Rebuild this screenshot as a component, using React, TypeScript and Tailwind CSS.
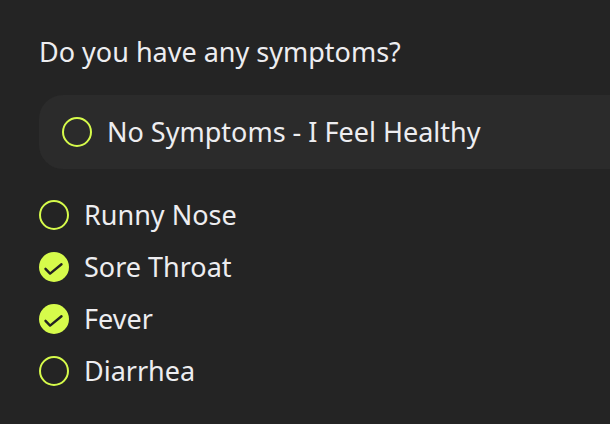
const options = [
  { label: 'Runny Nose', checked: false },
  { label: 'Sore Throat', checked: true },
  { label: 'Fever', checked: true },
  { label: 'Diarrhea', checked: false },
];

function Check({ checked }: { checked: boolean }) {
  if (!checked) {
    return <span className="w-[30px] h-[30px] shrink-0 rounded-full border-2 border-[#d6fb4b]" />;
  }
  return (
    <span className="w-[30px] h-[30px] shrink-0 rounded-full bg-[#d6fb4b] flex">
      <svg width="30" height="30" viewBox="0 0 30 30" fill="none" stroke="#222222" strokeWidth="2.4" strokeLinecap="round" strokeLinejoin="round">
        <path d="M6.5 16.8l4.6 4.8L22.5 12.2" />
      </svg>
    </span>
  );
}

export default function App() {
  return (
    <div className="min-h-screen w-full overflow-hidden bg-[#242424] text-[#ededf0] font-['Noto_Sans',sans-serif]">
      <div className="pl-[39px] pt-[32px]">
        <h2 className="text-[27px] leading-[40px]">Do you have any symptoms?</h2>

        <div className="mt-[23px] h-[74px] rounded-l-[24px] bg-[#2b2b2b] flex items-center gap-[15px] pl-[23px]">
          <Check checked={false} />
          <span className="text-[27px]">No Symptoms - I Feel Healthy</span>
        </div>

        <ul className="mt-[31px] flex flex-col gap-[22px]">
          {options.map((o) => (
            <li key={o.label} className="flex items-center gap-[15px] h-[30px]">
              <Check checked={o.checked} />
              <span className="text-[27px]">{o.label}</span>
            </li>
          ))}
        </ul>
      </div>
    </div>
  );
}
